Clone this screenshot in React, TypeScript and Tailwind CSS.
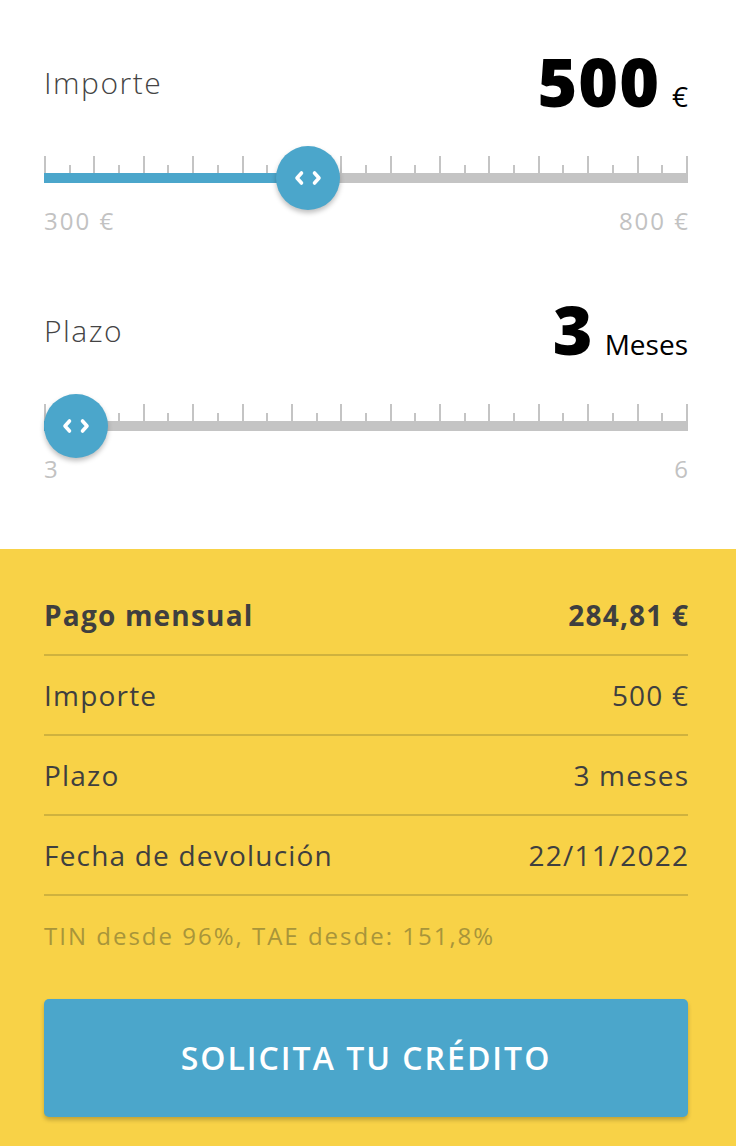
import React from "react";

const FONT = { fontFamily: "'Open Sans', Lato, sans-serif" };

function Chevrons() {
  return (
    <svg width="30" height="16" viewBox="0 0 30 16" fill="none">
      <path d="M8.5 3 L4 8 L8.5 13" stroke="white" strokeWidth="3.6" strokeLinecap="round" strokeLinejoin="round" />
      <path d="M21.5 3 L26 8 L21.5 13" stroke="white" strokeWidth="3.6" strokeLinecap="round" strokeLinejoin="round" />
    </svg>
  );
}

function Slider({ fraction }: { fraction: number }) {
  const ticks = Array.from({ length: 27 }, (_, i) => i);
  const trackWidth = 644;
  const thumbLeft = fraction * (trackWidth - 64);
  return (
    <div className="relative">
      <div className="flex justify-between items-end h-[17px]">
        {ticks.map((i) => (
          <div
            key={i}
            className={`w-[2px] bg-[#c4c4c4] ${i % 2 === 0 ? "h-[17px]" : "h-[8px]"}`}
          />
        ))}
      </div>
      <div className="h-[10px] bg-[#c4c4c4]">
        <div className="h-full bg-[#4ba6cb]" style={{ width: thumbLeft + 32 }} />
      </div>
      <div
        className="absolute top-[-10px] w-16 h-16 rounded-full bg-[#4ba6cb] shadow-[0_3px_5px_rgba(0,0,0,0.25)] flex items-center justify-center"
        style={{ left: thumbLeft }}
      >
        <Chevrons />
      </div>
    </div>
  );
}

function Row({ label, value, bold }: { label: string; value: string; bold?: boolean }) {
  return (
    <div
      className={`h-[80px] flex items-center justify-between border-b-2 border-[#cfb23e] text-[28px] text-[#3f3f3f] tracking-[1.2px] ${
        bold ? "font-bold" : "font-normal"
      }`}
    >
      <span>{label}</span>
      <span className="mr-[-1.2px]">{value}</span>
    </div>
  );
}

export default function App() {
  return (
    <div className="w-[736px] min-h-[1146px] bg-white" style={FONT}>
      <div className="pl-[44px] pr-[48px] pt-[52px] pb-[66px]">
        <div className="flex items-center justify-between h-[60px]">
          <span className="text-[30px] font-light text-[#444] tracking-[1.5px]">Importe</span>
          <div className="flex items-baseline gap-[12px] text-black">
            <span className="text-[68px] font-extrabold leading-none tracking-[1px]">500</span>
            <span className="text-[28px]">€</span>
          </div>
        </div>
        <div className="mt-[44px]">
          <Slider fraction={0.4} />
        </div>
        <div className="mt-[24px] flex justify-between text-[24px] text-[#c2c2c2] leading-[28px] tracking-[2px]">
          <span>300 €</span>
          <span className="mr-[-2px]">800 €</span>
        </div>

        <div className="mt-[65px] flex items-center justify-between h-[60px]">
          <span className="text-[30px] font-light text-[#444] tracking-[1.5px]">Plazo</span>
          <div className="flex items-baseline gap-[12px] text-black">
            <span className="text-[68px] font-extrabold leading-none">3</span>
            <span className="text-[28px]">Meses</span>
          </div>
        </div>
        <div className="mt-[44px]">
          <Slider fraction={0} />
        </div>
        <div className="mt-[24px] flex justify-between text-[24px] text-[#c2c2c2] leading-[28px]">
          <span>3</span>
          <span>6</span>
        </div>
      </div>

      <div className="bg-[#f8d247] pl-[44px] pr-[48px] pt-[27px] pb-[29px]">
        <Row label="Pago mensual" value="284,81 €" bold />
        <Row label="Importe" value="500 €" />
        <Row label="Plazo" value="3 meses" />
        <Row label="Fecha de devolución" value="22/11/2022" />
        <div className="h-[80px] flex items-center text-[24px] text-[#a8953a] tracking-[2px]">
          TIN desde 96%, TAE desde: 151,8%
        </div>
        <button className="mt-[23px] w-full h-[118px] rounded-[5px] bg-[#4ba6cb] shadow-[0_3px_4px_rgba(0,0,0,0.22)] text-white text-[32px] font-semibold uppercase tracking-[2px]">
          Solicita tu crédito
        </button>
      </div>
    </div>
  );
}
